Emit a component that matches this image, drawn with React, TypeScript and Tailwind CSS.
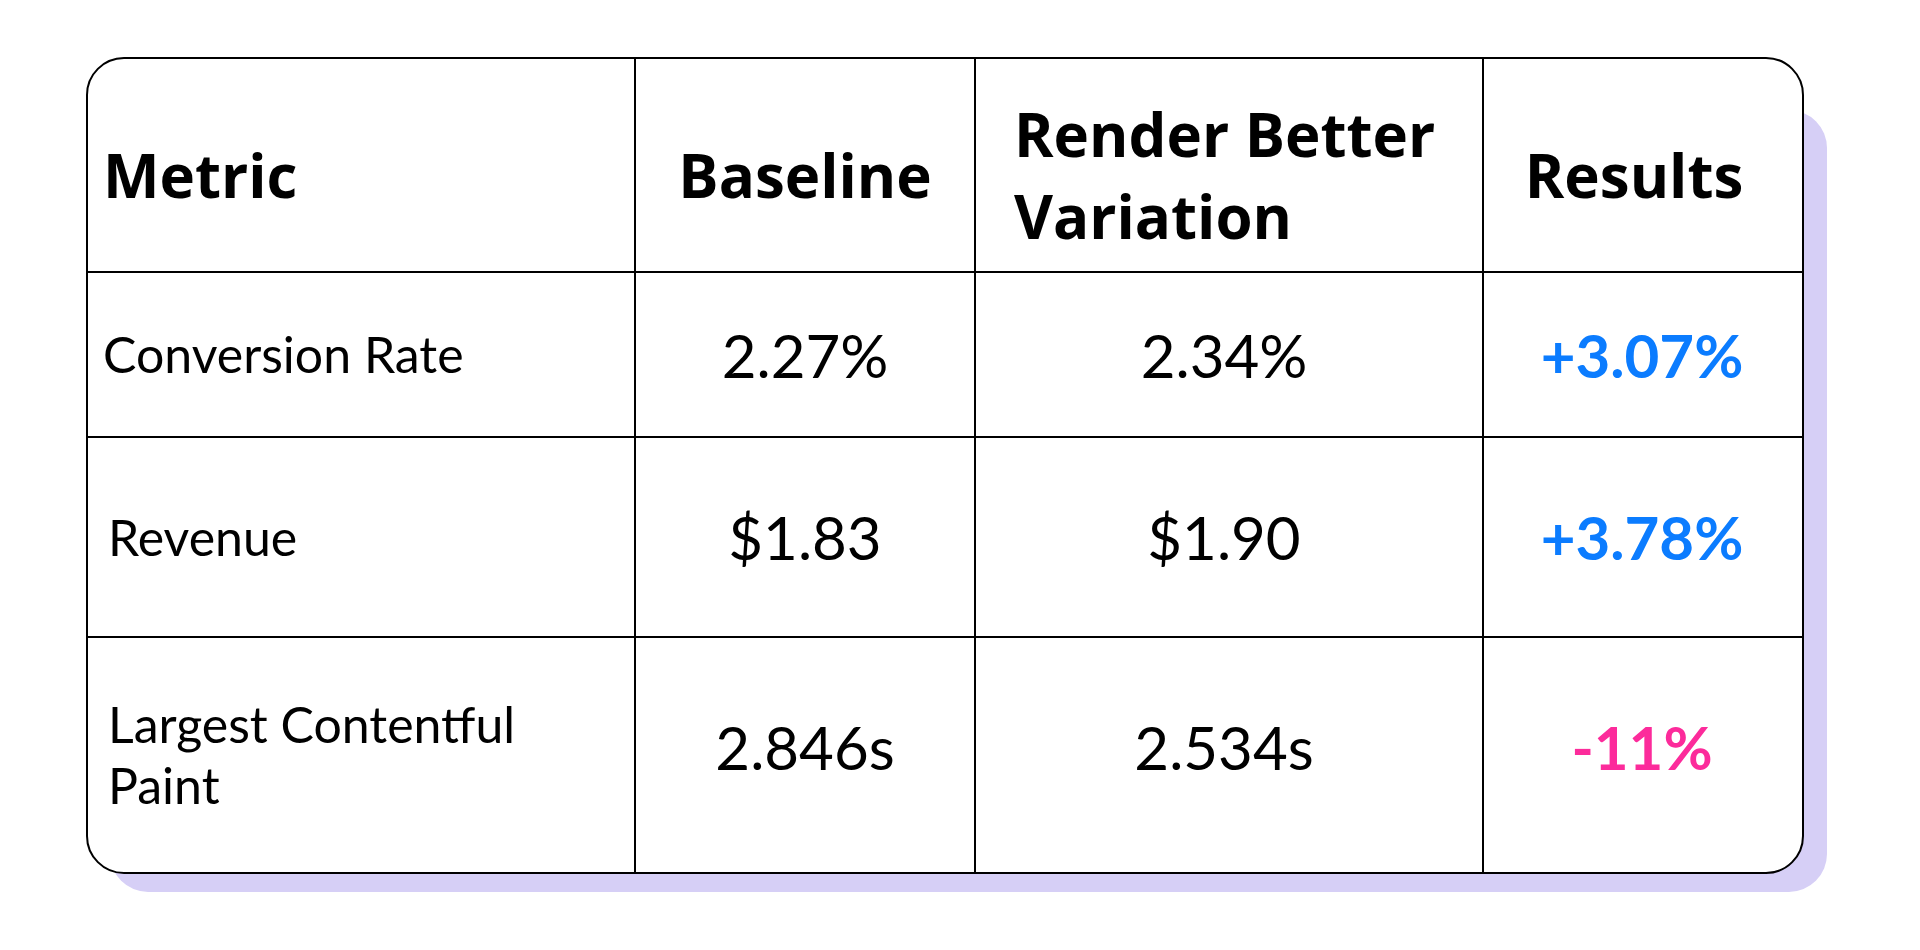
const headFont = "font-['Open_Sans',_'Liberation_Sans',_sans-serif]";
const bodyFont = "font-['Lato',_'Liberation_Sans',_sans-serif]";

type Row = {
  metric: string[];
  metricPad: string;
  baseline: string;
  variation: string;
  result: string;
  tone: 'up' | 'down';
};

const rows: Row[] = [
  { metric: ['Conversion Rate'], metricPad: 'pl-[15px]', baseline: '2.27%', variation: '2.34%', result: '+3.07%', tone: 'up' },
  { metric: ['Revenue'], metricPad: 'pl-[20px]', baseline: '$1.83', variation: '$1.90', result: '+3.78%', tone: 'up' },
  { metric: ['Largest Contentful', 'Paint'], metricPad: 'pl-[20px]', baseline: '2.846s', variation: '2.534s', result: '-11%', tone: 'down' },
];

export default function App() {
  return (
    <div className="min-h-screen bg-white text-black">
      <div className="pl-[86px] pt-[57px]">
        <div className="relative w-[1718px]">
          {/* lavender offset card behind the table */}
          <div className="absolute left-[24px] top-[53px] -right-[23px] -bottom-[18px] rounded-[38px] bg-[#d6cff6]" />

          <div className="relative grid grid-cols-[548px_340px_508px_318px] grid-rows-[214px_165px_200px_234px] overflow-hidden rounded-[38px] border-2 border-black bg-white">
            {/* header */}
            <div className={`flex items-center border-r-2 border-b-2 border-black pl-[15px] pt-[20px] ${headFont} text-[60px] font-bold leading-[82px]`}>
              Metric
            </div>
            <div className={`flex items-center justify-center border-r-2 border-b-2 border-black pt-[20px] ${headFont} text-[60px] font-bold leading-[82px]`}>
              Baseline
            </div>
            <div className={`flex items-center border-r-2 border-b-2 border-black pl-[38px] pt-[20px] ${headFont} text-[60px] font-bold leading-[82px]`}>
              <div>
                Render Better
                <br />
                Variation
              </div>
            </div>
            <div className={`flex items-center justify-center border-b-2 border-black pr-[18px] pt-[20px] ${headFont} text-[60px] font-bold leading-[82px]`}>
              Results
            </div>

            {rows.map((r, i) => {
              const last = i === rows.length - 1;
              const rowBorder = last ? '' : 'border-b-2';
              const lift = last ? 'pb-[16px]' : '';
              return (
                <div key={r.result} className="contents">
                  <div className={`flex items-center border-r-2 border-black ${rowBorder} ${r.metricPad} ${bodyFont} text-[50px] leading-[61px]`}>
                    <div>
                      {r.metric.map((line) => (
                        <div key={line}>{line}</div>
                      ))}
                    </div>
                  </div>
                  <div className={`flex items-center justify-center border-r-2 border-black ${rowBorder} ${lift} ${bodyFont} text-[60px] leading-[72px]`}>
                    {r.baseline}
                  </div>
                  <div className={`flex items-center justify-center border-r-2 border-black pr-[10px] ${rowBorder} ${lift} ${bodyFont} text-[60px] leading-[72px]`}>
                    {r.variation}
                  </div>
                  <div
                    className={`flex items-center justify-center border-black pr-[2px] ${rowBorder} ${lift} ${bodyFont} text-[60px] font-bold leading-[72px] ${
                      r.tone === 'up' ? 'text-[#0b7cff]' : 'text-[#fc2b9b]'
                    }`}
                  >
                    {r.result}
                  </div>
                </div>
              );
            })}
          </div>
        </div>
      </div>
    </div>
  );
}
